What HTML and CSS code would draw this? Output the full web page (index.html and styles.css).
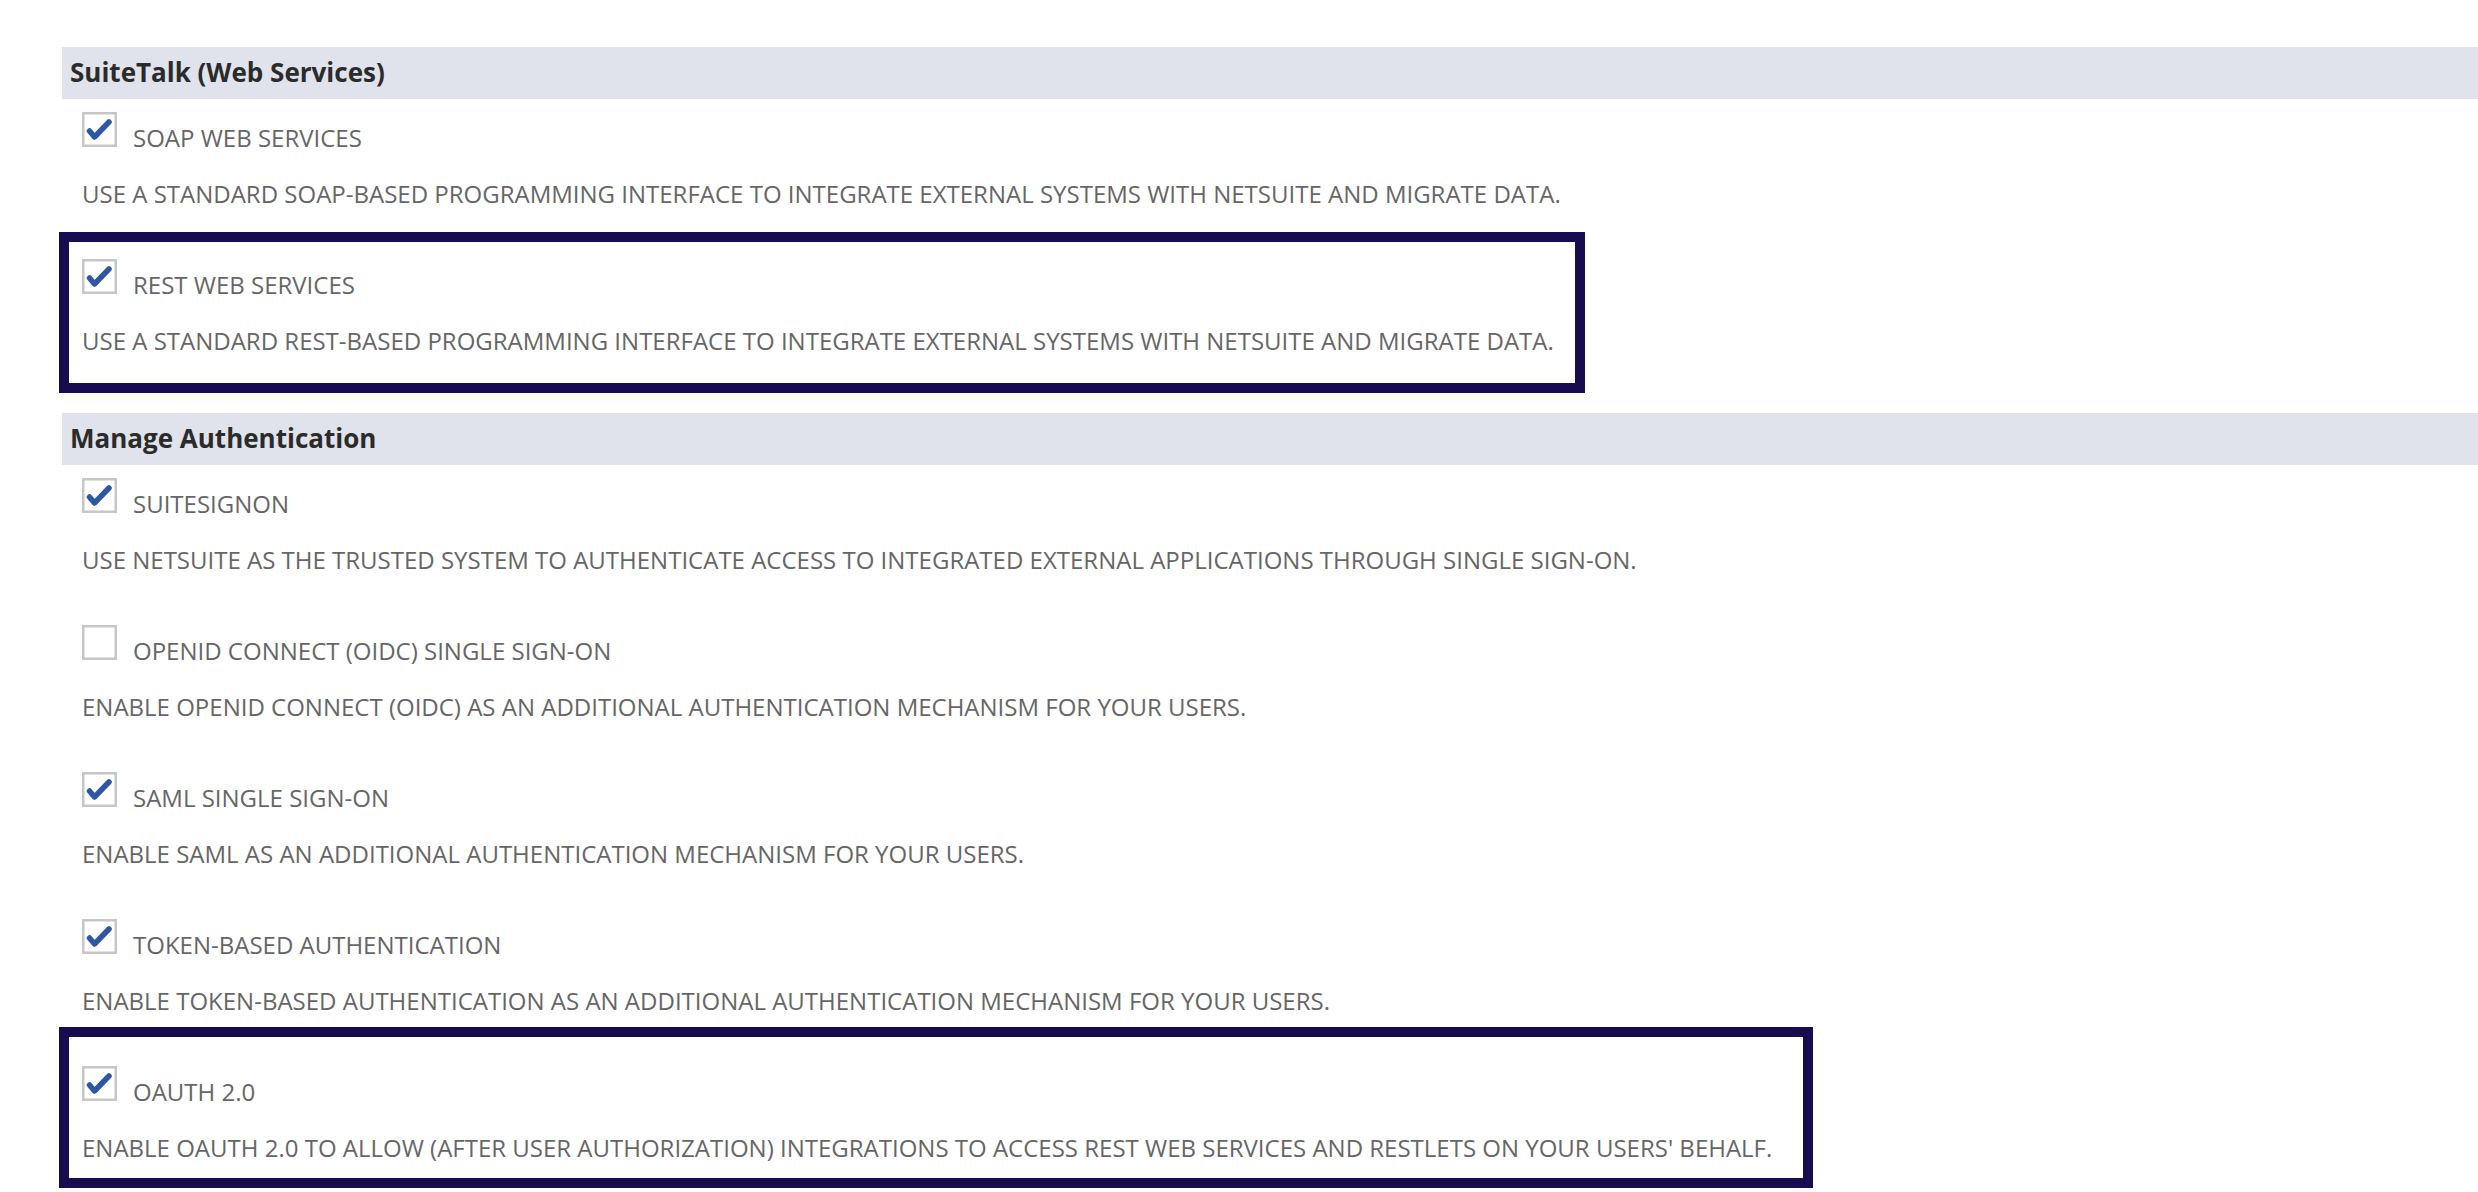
FILE: index.html
```html
<!DOCTYPE html>
<html lang="en">
<head>
<meta charset="utf-8">
<title>Features - SuiteCloud</title>
<link rel="stylesheet" href="styles.css">
</head>
<body>
<div class="page">
  <section class="section">
    <div class="section-header">SuiteTalk (Web Services)</div>
    <div class="item">
      <div class="row">
        <svg class="cb" viewBox="0 0 35 35"><rect x="1.25" y="1.25" width="32.5" height="32.5" class="cb-box"/><path class="cb-check" d="M7.5 19 L12.5 25 L27 10"/></svg>
        <span class="label">SOAP WEB SERVICES</span>
      </div>
      <div class="desc">USE A STANDARD SOAP-BASED PROGRAMMING INTERFACE TO INTEGRATE EXTERNAL SYSTEMS WITH NETSUITE AND MIGRATE DATA.</div>
    </div>
    <div class="item item--hl item--hl1">
      <div class="row">
        <svg class="cb" viewBox="0 0 35 35"><rect x="1.25" y="1.25" width="32.5" height="32.5" class="cb-box"/><path class="cb-check" d="M7.5 19 L12.5 25 L27 10"/></svg>
        <span class="label">REST WEB SERVICES</span>
      </div>
      <div class="desc">USE A STANDARD REST-BASED PROGRAMMING INTERFACE TO INTEGRATE EXTERNAL SYSTEMS WITH NETSUITE AND MIGRATE DATA.</div>
    </div>
  </section>
  <section class="section section--second">
    <div class="section-header">Manage Authentication</div>
    <div class="item">
      <div class="row">
        <svg class="cb" viewBox="0 0 35 35"><rect x="1.25" y="1.25" width="32.5" height="32.5" class="cb-box"/><path class="cb-check" d="M7.5 19 L12.5 25 L27 10"/></svg>
        <span class="label">SUITESIGNON</span>
      </div>
      <div class="desc">USE NETSUITE AS THE TRUSTED SYSTEM TO AUTHENTICATE ACCESS TO INTEGRATED EXTERNAL APPLICATIONS THROUGH SINGLE SIGN-ON.</div>
    </div>
    <div class="item">
      <div class="row">
        <svg class="cb" viewBox="0 0 35 35"><rect x="1.25" y="1.25" width="32.5" height="32.5" class="cb-box"/></svg>
        <span class="label">OPENID CONNECT (OIDC) SINGLE SIGN-ON</span>
      </div>
      <div class="desc">ENABLE OPENID CONNECT (OIDC) AS AN ADDITIONAL AUTHENTICATION MECHANISM FOR YOUR USERS.</div>
    </div>
    <div class="item">
      <div class="row">
        <svg class="cb" viewBox="0 0 35 35"><rect x="1.25" y="1.25" width="32.5" height="32.5" class="cb-box"/><path class="cb-check" d="M7.5 19 L12.5 25 L27 10"/></svg>
        <span class="label">SAML SINGLE SIGN-ON</span>
      </div>
      <div class="desc">ENABLE SAML AS AN ADDITIONAL AUTHENTICATION MECHANISM FOR YOUR USERS.</div>
    </div>
    <div class="item">
      <div class="row">
        <svg class="cb" viewBox="0 0 35 35"><rect x="1.25" y="1.25" width="32.5" height="32.5" class="cb-box"/><path class="cb-check" d="M7.5 19 L12.5 25 L27 10"/></svg>
        <span class="label">TOKEN-BASED AUTHENTICATION</span>
      </div>
      <div class="desc">ENABLE TOKEN-BASED AUTHENTICATION AS AN ADDITIONAL AUTHENTICATION MECHANISM FOR YOUR USERS.</div>
    </div>
    <div class="item item--hl item--hl2">
      <div class="row">
        <svg class="cb" viewBox="0 0 35 35"><rect x="1.25" y="1.25" width="32.5" height="32.5" class="cb-box"/><path class="cb-check" d="M7.5 19 L12.5 25 L27 10"/></svg>
        <span class="label">OAUTH 2.0</span>
      </div>
      <div class="desc">ENABLE OAUTH 2.0 TO ALLOW (AFTER USER AUTHORIZATION) INTEGRATIONS TO ACCESS REST WEB SERVICES AND RESTLETS ON YOUR USERS' BEHALF.</div>
    </div>
  </section>
</div>
</body>
</html>
```

FILE: styles.css
```css
html, body {
  margin: 0;
  padding: 0;
  background: #ffffff;
}

body {
  font-family: "Open Sans", "Liberation Sans", Arial, sans-serif;
  overflow: hidden;
}

.page {
  padding-top: 47px;
}

.section--second {
  margin-top: 20px;
}

.section-header {
  margin-left: 62px;
  height: 52px;
  line-height: 51px;
  padding-left: 8px;
  background: #e0e3eb;
  color: #2b2b2b;
  font-size: 26px;
  font-weight: 700;
  white-space: nowrap;
}

.item {
  box-sizing: border-box;
  height: 147px;
  padding: 14px 0 0 82px;
}

.row {
  display: flex;
  align-items: flex-start;
  height: 42px;
}

.cb {
  width: 35px;
  height: 35px;
  margin-top: -1px;
  flex: none;
}

.cb-box {
  fill: #ffffff;
  stroke: #c6c6c6;
  stroke-width: 2.5;
}

.cb-check {
  fill: none;
  stroke: #2d57a3;
  stroke-width: 5.5;
  stroke-linecap: round;
  stroke-linejoin: round;
}

.label {
  margin-left: 16px;
  padding-top: 8px;
  font-size: 24px;
  line-height: 34px;
  color: #666666;
  white-space: nowrap;
}

.desc {
  margin-top: 22px;
  font-size: 24px;
  line-height: 34px;
  color: #666666;
  white-space: nowrap;
}

.item--hl {
  height: auto;
  margin-left: 59px;
  border: 10px solid #190b4f;
  padding-left: 13px;
}

.item--hl1 {
  width: 1526px;
  margin-top: -14px;
  padding-top: 18px;
  padding-bottom: 25px;
}

.item--hl2 {
  width: 1754px;
  margin-top: -26px;
  padding-top: 30px;
  padding-bottom: 13px;
}
```
